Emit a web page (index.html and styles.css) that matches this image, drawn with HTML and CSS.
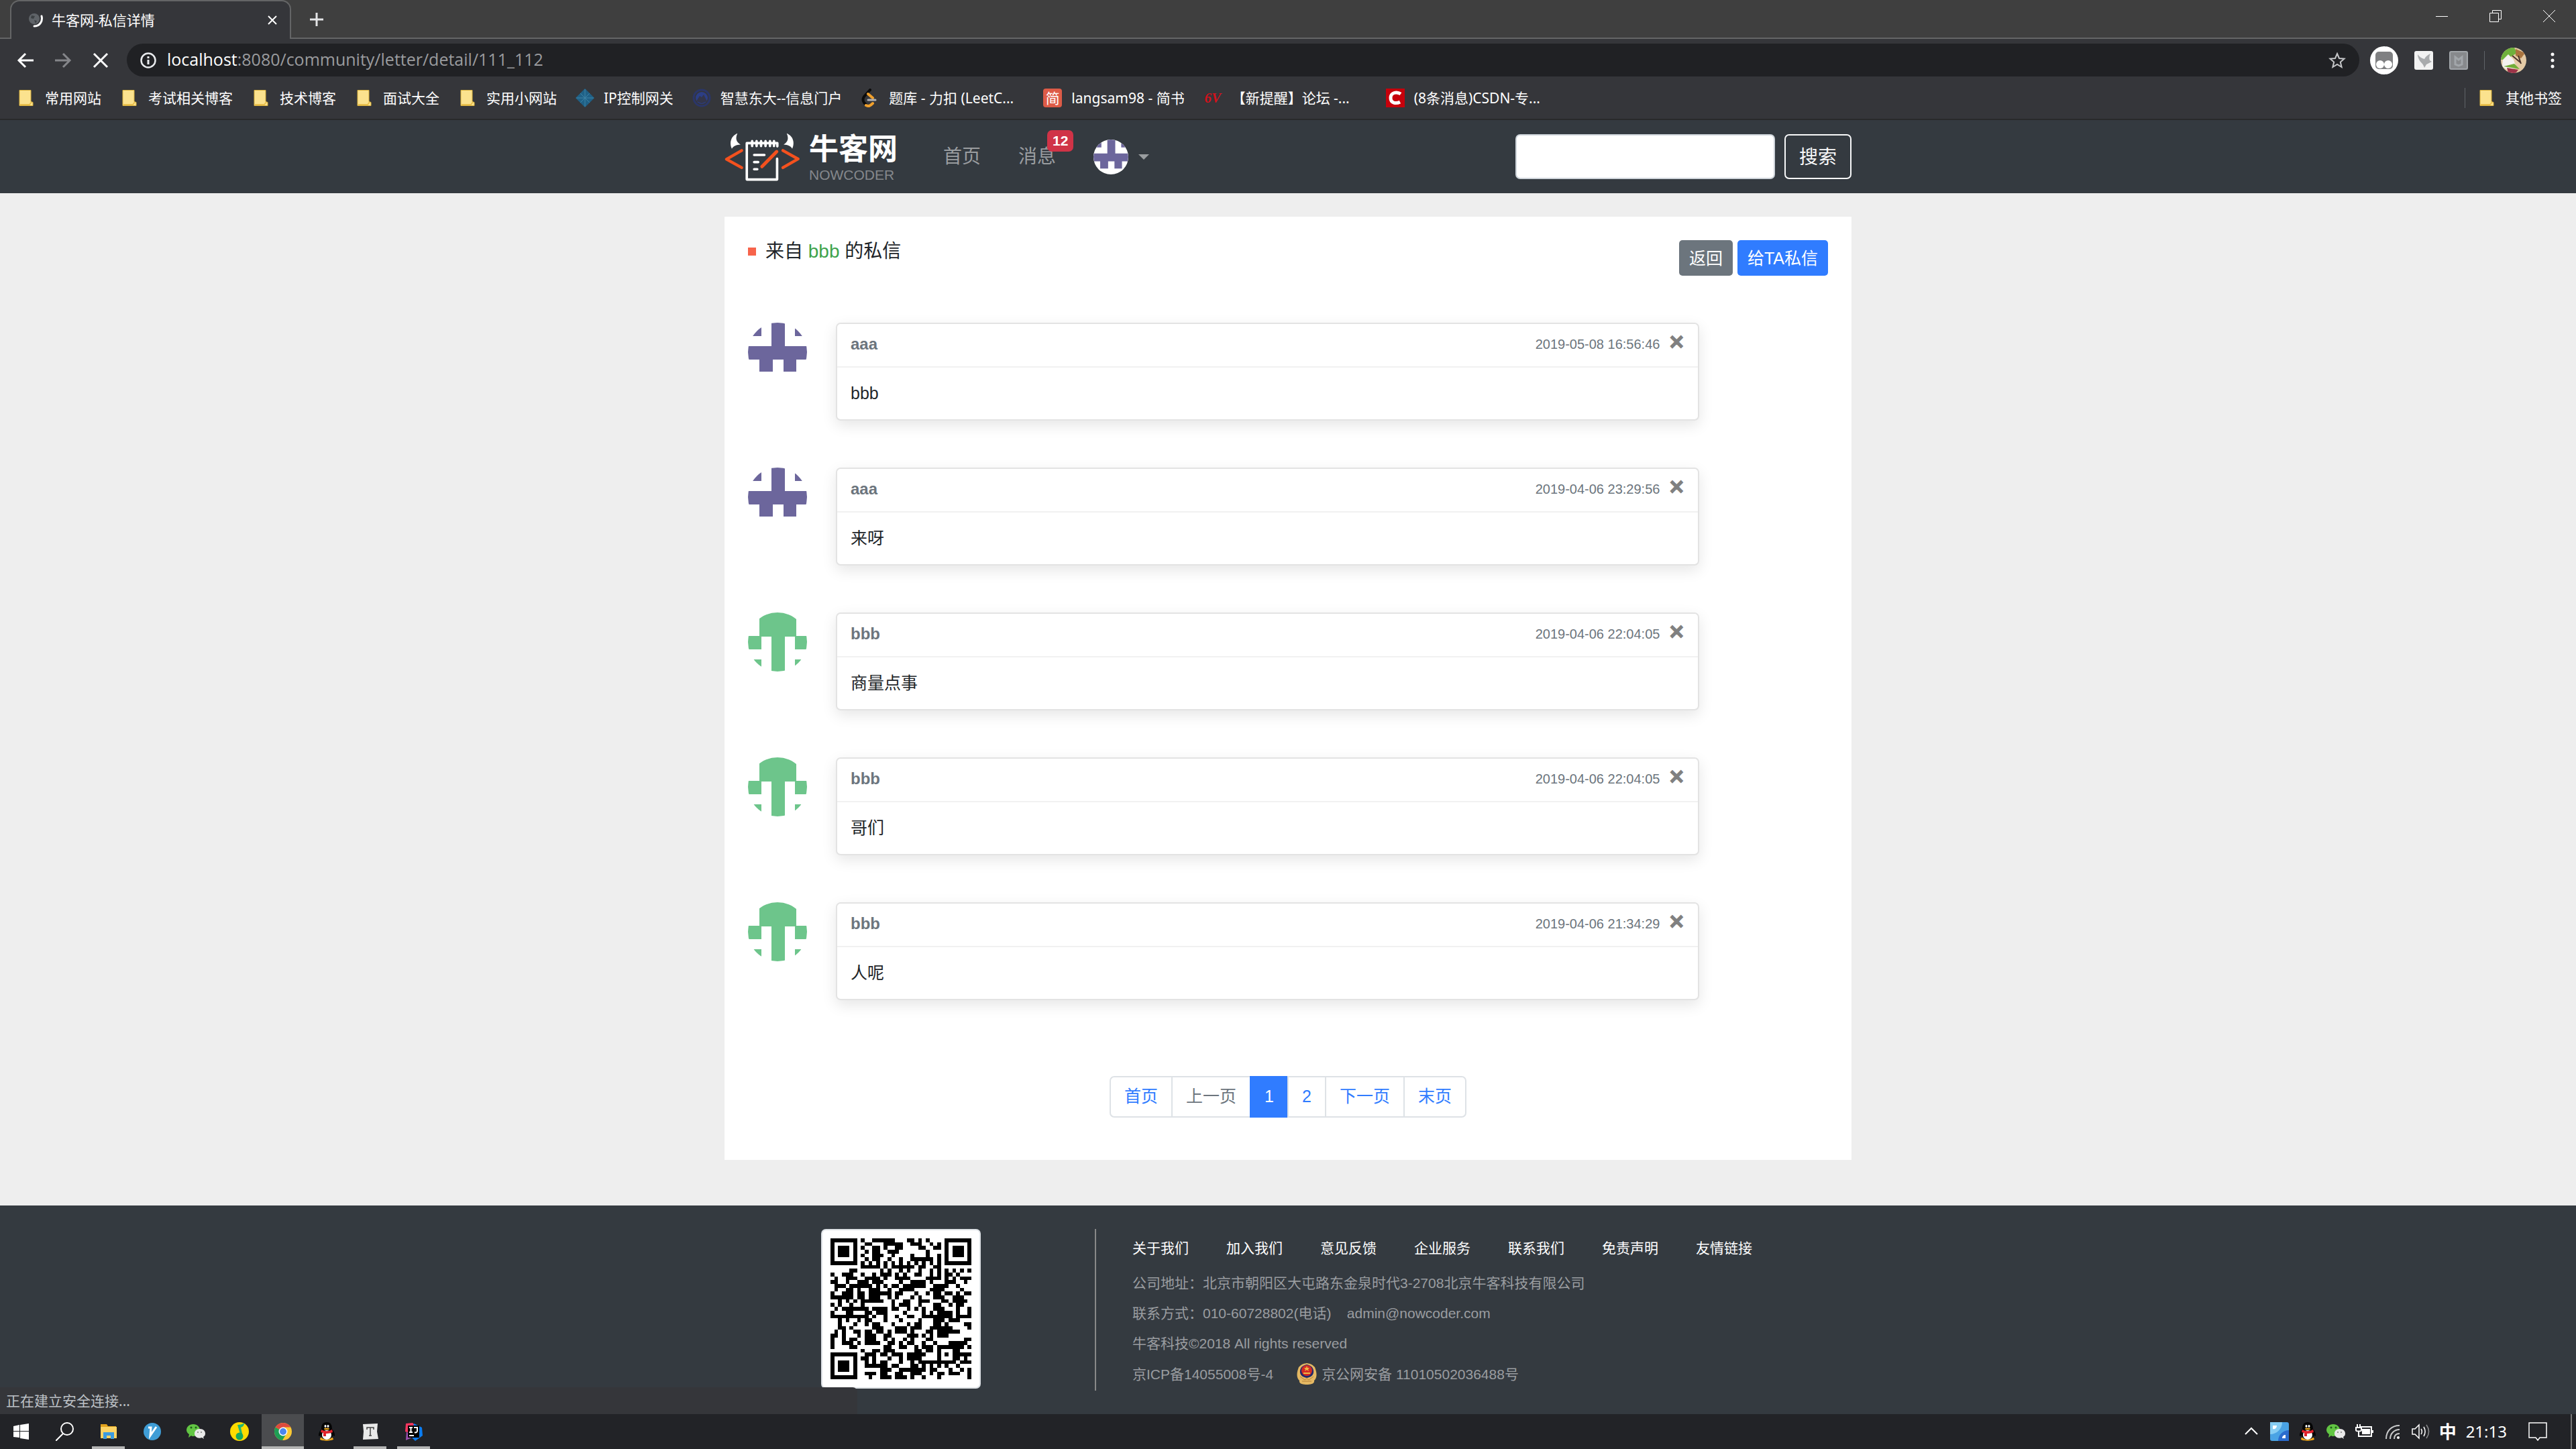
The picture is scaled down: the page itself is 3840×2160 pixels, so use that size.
FILE: index.html
```html
<!DOCTYPE html>
<html lang="zh-CN">
<head>
    <meta charset="UTF-8">
    <meta name="viewport" content="width=device-width, initial-scale=1.0">
    <title>牛客网-私信详情</title>
    <link rel="stylesheet" href="styles.css">
</head>
<body>

<!-- 公用图标 -->
<svg class="sprite" aria-hidden="true">
    <defs>
        <clipPath id="round"><circle cx="44" cy="44" r="44"/></clipPath>
    </defs>
    <symbol id="user-aaa" viewBox="0 0 88 88">
        <path clip-path="url(#round)" fill="#6c669c" d="M0 0h20v20H0zM35 0h20v36H35zM70 0h18v20H70zM0 35h88v20H0zM17 54h20v19H17zM53 54h19v19H53z"/>
    </symbol>
    <symbol id="user-bbb" viewBox="0 0 88 88">
        <path clip-path="url(#round)" fill="#6dc58b" d="M17 0h55v36H17zM0 35h20v20H0zM70 35h18v20H70zM35 35h20v53H35zM0 70h20v18H0zM70 70h18v18H70z"/>
    </symbol>
    <symbol id="folder" viewBox="0 0 28 28">
        <path fill="#fbe28e" stroke="#d9b13c" d="M4 2.500h17v17l3 1v5H4z"/>
        <path fill="none" stroke="#e9c04c" stroke-width="2" d="M5 24h14l3-4"/>
    </symbol>
    <symbol id="qq" viewBox="0 0 28 28">
        <path fill="#eba51c" d="M4 25c1-4 6-3 9 0 4-3 9-4 11 0 1 3-21 4-20 0z"/>
        <path fill="#050505" d="M14 0c6 0 8 4 8 10 2 3 4 6 4 9 0 3-2 2-3 0 0 4-4 7-9 7s-9-3-9-7c-1 2-3 3-3 0 0-3 2-6 4-9 0-6 2-10 8-10z"/>
        <ellipse cx="14" cy="19" rx="7" ry="7" fill="#fff"/>
        <path fill="#e0222b" d="M6 11c5 3 11 3 16 0l1 4c-3 1-6 2-9 2h-1v4H9v-5l-4-1z"/>
        <ellipse cx="12" cy="6" rx="1.500" ry="2" fill="#fff"/>
        <ellipse cx="16" cy="6" rx="1.500" ry="2" fill="#fff"/>
        <ellipse cx="14" cy="10" rx="4" ry="1.300" fill="#eba51c"/>
    </symbol>
    <symbol id="wechat" viewBox="0 0 28 28">
        <path fill="#62c543" d="M10 3c6 0 10 4 10 9s-4 9-10 9c-1 0-2 0-3-1l-4 3 1-5c-2-1-4-4-4-6 0-5 4-9 10-9z"/>
        <circle cx="7" cy="8" r="1.500" fill="#1f5b1b"/><circle cx="14" cy="8" r="1.500" fill="#1f5b1b"/>
        <path fill="#e9e9e9" d="M20 10c5 0 8 3 8 7 0 2-1 4-3 5l1 3-3-2c-6 2-11-1-11-6 0-4 3-7 8-7z"/>
        <circle cx="17" cy="15" r="1" fill="#777"/><circle cx="22" cy="15" r="1" fill="#777"/>
    </symbol>
</svg>

<div class="browser">
    <div class="tab-strip">
        <div class="tab">
            <svg class="favicon" viewBox="0 0 24 24"><circle cx="10" cy="10" r="8" fill="#5f6368"/><path d="M6 5l5 1-2 4-4-1zM10 12l4 1-2 4z" fill="#3c4043"/><path d="M21 6c2 8-3 15-11 15" fill="none" stroke="#fff" stroke-width="3" stroke-linecap="round"/></svg>
            <span class="tab-title">牛客网-私信详情</span>
            <button class="icon-btn" aria-label="关闭标签页"><svg width="16" height="16" viewBox="0 0 16 16"><path d="M2 2l12 12M14 2L2 14" stroke="#fff" stroke-width="2"/></svg></button>
        </div>
        <button class="icon-btn new-tab" aria-label="打开新的标签页"><svg width="22" height="22" viewBox="0 0 22 22"><path d="M11 1v20M1 11h20" stroke="#e3e4e6" stroke-width="3"/></svg></button>
        <div class="window-buttons">
            <button class="icon-btn" aria-label="最小化"><svg width="20" height="20" viewBox="0 0 20 20"><path d="M1 10.500h18" stroke="#fff"/></svg></button>
            <button class="icon-btn" aria-label="还原"><svg width="20" height="20" viewBox="0 0 20 20" fill="none" stroke="#fff"><path d="M1.500 5.500h13v13h-13zM5.500 5V1.500h13v13H15"/></svg></button>
            <button class="icon-btn" aria-label="关闭"><svg width="20" height="20" viewBox="0 0 20 20"><path d="M1 1l18 18M19 1L1 19" stroke="#fff"/></svg></button>
        </div>
    </div>

    <div class="toolbar">
        <button class="icon-btn" aria-label="后退"><svg width="26" height="26" viewBox="0 0 26 26" fill="none" stroke="#fff" stroke-width="3"><path d="M25 13H3M13 3L3 13l10 10"/></svg></button>
        <button class="icon-btn" aria-label="前进"><svg width="26" height="26" viewBox="0 0 26 26" fill="none" stroke="#85868a" stroke-width="3"><path d="M1 13h22M13 3l10 10-10 10"/></svg></button>
        <button class="icon-btn" aria-label="停止"><svg width="26" height="26" viewBox="0 0 26 26" fill="none" stroke="#fff" stroke-width="3"><path d="M3 3l20 20M23 3L3 23"/></svg></button>
        <div class="address">
            <svg width="24" height="24" viewBox="0 0 24 24" fill="none" stroke="#e8eaed"><circle cx="12" cy="12" r="10.500" stroke-width="2.500"/><path d="M12 11v7M12 6v3" stroke-width="3"/></svg>
            <span class="url"><b>localhost</b>:8080/community/letter/detail/111_112</span>
            <svg width="26" height="26" viewBox="0 0 26 26"><path d="M13 3l3 7 7.500.6-5.700 5 1.800 7.400-6.600-4-6.600 4 1.800-7.400-5.700-5L10 10z" fill="none" stroke="#c6c7c9" stroke-width="2"/></svg>
        </div>
        <div class="extensions">
            <svg width="42" height="42" viewBox="0 0 42 42"><circle cx="21" cy="21" r="21" fill="#fff"/><rect x="8" y="8" width="26" height="26" rx="5" fill="#7f8082"/><circle cx="15" cy="27" r="6" fill="#fff"/><circle cx="27" cy="27" r="6" fill="#fff"/></svg>
            <svg width="28" height="28" viewBox="0 0 28 28"><rect width="28" height="28" rx="3" fill="#f2f2f2"/><path d="M5 5c3 4 6 6 10 7 2-4 5-6 9-8-2 4-2 7-1 10l3 2c-3 1-5 3-8 4l-3 5c-1-3-2-5-4-7-3-3-6-8-6-13z" fill="#a9abad"/></svg>
            <svg width="28" height="28" viewBox="0 0 28 28"><rect x="1" y="1" width="26" height="26" rx="2" fill="#87898c" stroke="#a2a6aa" stroke-width="2"/><path d="M9 20V9l5 4 5-4v11l-5 2z" fill="none" stroke="#a2a6aa" stroke-width="3"/></svg>
            <span class="divider"></span>
            <svg width="38" height="38" viewBox="0 0 38 38">
                <clipPath id="profile"><circle cx="19" cy="19" r="19"/></clipPath>
                <g clip-path="url(#profile)"><path fill="#e5cba6" d="M0 0h38v38H0z"/><path fill="#6fb13c" d="M0 0h20l4 8-10 6-10 4H0z"/><path fill="#a9743f" d="M22 2l14 6-6 8-8-4z"/><path fill="#f4f1f0" d="M3 18l8-8 8 8 4 12-12 4-9-6z"/><path stroke="#4a342b" stroke-width="2" d="M17 12l12 10M26 12l4 12"/><path fill="#72ad38" d="M4 28l16-4 8 8-12-2z"/><path fill="#9d3449" d="M9 30l17 3-4 5H11z"/></g>
            </svg>
            <button class="icon-btn" aria-label="菜单"><svg width="6" height="24" viewBox="0 0 6 24" fill="#fff"><circle cx="3" cy="3" r="2.500"/><circle cx="3" cy="12" r="2.500"/><circle cx="3" cy="21" r="2.500"/></svg></button>
        </div>
    </div>

    <div class="bookmarks">
        <a href="#"><svg><use href="#folder"/></svg><span>常用网站</span></a>
        <a href="#"><svg><use href="#folder"/></svg><span>考试相关博客</span></a>
        <a href="#"><svg><use href="#folder"/></svg><span>技术博客</span></a>
        <a href="#"><svg><use href="#folder"/></svg><span>面试大全</span></a>
        <a href="#"><svg><use href="#folder"/></svg><span>实用小网站</span></a>
        <a href="#"><svg viewBox="0 0 28 28"><path fill="#1f6187" d="M14 0l14 14-14 14L0 14z"/><path d="M7 7l14 14M21 7L7 21M14 1v26M1 14h26" stroke="#3e83a5" stroke-width="1"/></svg><span>IP控制网关</span></a>
        <a href="#"><svg viewBox="0 0 28 28"><circle cx="14" cy="14" r="12" fill="none" stroke="#2b3668" stroke-width="3"/><circle cx="14" cy="14" r="9" fill="#2c3e86"/><path fill="#33354a" d="M6 19l5-8 3 2 3-4 5 10-8 3z"/></svg><span>智慧东大--信息门户</span></a>
        <a href="#"><svg viewBox="0 0 28 28" fill="none" stroke-linecap="round" stroke-width="4"><path stroke="#0b0b0b" d="M14 2L5 12c-2 3-2 6 0 9l3 3"/><path stroke="#f0a02c" d="M11 8l7 6M8 25c4 2 6 1 10-3"/><path stroke="#b3b3b3" stroke-width="3" d="M11 17h11"/></svg><span class="wide">题库 - 力扣 (LeetC...</span></a>
        <a href="#"><span class="jian">简</span><span>langsam98 - 简书</span></a>
        <a href="#"><span class="six">6V</span><span class="wide">【新提醒】论坛 -...</span></a>
        <a href="#"><svg viewBox="0 0 28 28"><path fill="#c7000b" d="M0 0h28v28H0z"/><path d="M22 8c-6-4-15-2-15 6s8 9 14 6" fill="none" stroke="#fff" stroke-width="5"/></svg><span class="wide">(8条消息)CSDN-专...</span></a>
        <a href="#" class="other-bookmarks"><svg><use href="#folder"/></svg><span>其他书签</span></a>
    </div>
</div>

<header class="navbar">
    <div class="container nav-inner">
        <a class="brand" href="#">
            <svg width="112" height="72" viewBox="18 20 337 216" fill="none" stroke-linecap="round" stroke-linejoin="round">
                <path fill="#fff" d="M76 22c-34 15-35 48-25 69 7-13 20-18 39-19-20-11-24-27-14-50zM297 22c34 15 35 48 25 69-7-13-20-18-39-19 20-11 24-27 14-50z"/>
                <path stroke="#fff" stroke-width="11" d="M255 80V66H118v163h136v-93M142 57v22M162 57v22M182 57v22M202 57v22M222 57v22M240 57v22"/>
                <path stroke="#fff" stroke-width="11" d="M151 119h46M151 151h18M151 183h14"/>
                <path stroke="#f4511e" stroke-width="13" d="M95 99l-68 39 68 38M280 99l68 38-68 39"/>
                <path stroke="#f4511e" stroke-width="15" d="M252 104l-62 63-4 4"/>
            </svg>
            <span class="brand-text"><strong>牛客网</strong><small>NOWCODER</small></span>
        </a>
        <nav class="nav-links">
            <a href="#">首页</a>
            <a href="#" class="message-link">消息<span class="badge">12</span></a>
            <button class="user-menu" aria-label="用户菜单"><svg class="nav-avatar"><use href="#user-aaa"/></svg><span class="caret"></span></button>
        </nav>
        <form class="search">
            <input type="search" aria-label="搜索内容">
            <button type="button">搜索</button>
        </form>
    </div>
</header>

<main class="container letters">
    <div class="letters-head">
        <h1><i class="square"></i><span>来自 <em>bbb</em> 的私信</span></h1>
        <div class="actions">
            <button class="btn btn-back">返回</button>
            <button class="btn btn-send">给TA私信</button>
        </div>
    </div>

    <ul class="letter-list">
        <li>
            <a href="#" aria-label="aaa"><svg class="avatar"><use href="#user-aaa"/></svg></a>
            <div class="toast">
                <div class="toast-header"><strong>aaa</strong><small>2019-05-08 16:56:46</small><button class="close" aria-label="删除">&times;</button></div>
                <div class="toast-body">bbb</div>
            </div>
        </li>
        <li>
            <a href="#" aria-label="aaa"><svg class="avatar"><use href="#user-aaa"/></svg></a>
            <div class="toast">
                <div class="toast-header"><strong>aaa</strong><small>2019-04-06 23:29:56</small><button class="close" aria-label="删除">&times;</button></div>
                <div class="toast-body">来呀</div>
            </div>
        </li>
        <li>
            <a href="#" aria-label="bbb"><svg class="avatar"><use href="#user-bbb"/></svg></a>
            <div class="toast">
                <div class="toast-header"><strong>bbb</strong><small>2019-04-06 22:04:05</small><button class="close" aria-label="删除">&times;</button></div>
                <div class="toast-body">商量点事</div>
            </div>
        </li>
        <li>
            <a href="#" aria-label="bbb"><svg class="avatar"><use href="#user-bbb"/></svg></a>
            <div class="toast">
                <div class="toast-header"><strong>bbb</strong><small>2019-04-06 22:04:05</small><button class="close" aria-label="删除">&times;</button></div>
                <div class="toast-body">哥们</div>
            </div>
        </li>
        <li>
            <a href="#" aria-label="bbb"><svg class="avatar"><use href="#user-bbb"/></svg></a>
            <div class="toast">
                <div class="toast-header"><strong>bbb</strong><small>2019-04-06 21:34:29</small><button class="close" aria-label="删除">&times;</button></div>
                <div class="toast-body">人呢</div>
            </div>
        </li>
    </ul>

    <nav class="pagination" aria-label="分页">
        <a href="#">首页</a>
        <a href="#" class="disabled">上一页</a>
        <a href="#" class="active">1</a>
        <a href="#">2</a>
        <a href="#">下一页</a>
        <a href="#">末页</a>
    </nav>
</main>

<footer class="footer">
    <div class="container footer-inner">
        <div class="qrcode">
            <svg viewBox="0 0 37 37" shape-rendering="crispEdges"><path id="qr"/></svg>
        </div>
        <div class="footer-info">
            <div class="footer-links">
                <a href="#">关于我们</a>
                <a href="#">加入我们</a>
                <a href="#">意见反馈</a>
                <a href="#">企业服务</a>
                <a href="#">联系我们</a>
                <a href="#">免责声明</a>
                <a href="#">友情链接</a>
            </div>
            <p>公司地址：北京市朝阳区大屯路东金泉时代3-2708北京牛客科技有限公司</p>
            <p>联系方式：010-60728802(电话)&nbsp;&nbsp;&nbsp;&nbsp;admin@nowcoder.com</p>
            <p>牛客科技©2018 All rights reserved</p>
            <p class="record">
                <span>京ICP备14055008号-4</span>
                <svg width="30" height="32" viewBox="0 0 30 32"><path fill="#e4b863" d="M15 0c7 1 9 3 12 6 3 8 4 15-1 20 1 5-6 6-11 6S3 31 4 26c-5-5-4-12-1-20 3-3 5-5 12-6z"/><path fill="#22296b" d="M15 2c8 2 9 5 10 9 1 7-4 10-10 11C9 21 4 18 5 11c1-4 2-7 10-9z"/><circle cx="15" cy="11" r="8" fill="#d42b25"/><path fill="#efb744" d="M15 4l1 3h3l-2 2 1 3-3-2-3 2 1-3-2-2h3zM10 14h10v2H10z"/><path fill="none" stroke="#b67e39" d="M5 20l7 5 3-2 3 2 7-5M8 27h14"/></svg>
                <span>京公网安备 11010502036488号</span>
            </p>
        </div>
    </div>
</footer>

<div class="taskbar">
    <div class="status">正在建立安全连接...</div>
    <div class="apps">
        <button aria-label="开始"><svg viewBox="0 0 28 28" fill="#fff"><path d="M2 6l9-2v9H2zM12 4l13-2v11H12zM2 14h9v9l-9-1zM12 14h13v12l-13-2z"/></svg></button>
        <button aria-label="搜索"><svg viewBox="0 0 28 28" fill="none" stroke="#fff" stroke-width="2"><circle cx="17" cy="10" r="9"/><path d="M11 17L0 28"/></svg></button>
        <button class="open" aria-label="文件资源管理器"><svg viewBox="0 0 28 28"><path fill="#e2a21c" d="M2 3h9l2 3h12v6H2z"/><path fill="#fdd365" d="M2 7h24v17H2z"/><path fill="#3b9be0" d="M6 15h16v10h-5v-5h-6v5H6z"/></svg></button>
        <button aria-label="V"><svg viewBox="0 0 28 28"><circle cx="14" cy="14" r="13" fill="#3f9dd6"/><path d="M8 8h4l-1 12 9-13" fill="none" stroke="#fff" stroke-width="3"/></svg></button>
        <button aria-label="微信"><svg><use href="#wechat"/></svg></button>
        <button aria-label="QQ音乐"><svg viewBox="0 0 28 28"><circle cx="14" cy="14" r="14" fill="#ffdb00"/><path d="M11 4c4 0 8-1 10-3 0 4-2 6-5 7l3 13h-3L11 4z" fill="#22b573"/><circle cx="14" cy="21" r="5.500" fill="#17a95f"/></svg></button>
        <button class="open current" aria-label="Chrome"><svg viewBox="0 0 28 28"><circle cx="14" cy="14" r="13" fill="#fcc934"/><path fill="#1e9e55" d="M14 14L2.700 7.500A13 13 0 0 0 13 27l6-10z"/><path fill="#dd4b3e" d="M14 14L2.700 7.500a13 13 0 0 1 22.600 0H14z"/><circle cx="14" cy="14" r="6.500" fill="#fff"/><circle cx="14" cy="14" r="5" fill="#4a86ee"/></svg></button>
        <button aria-label="QQ"><svg><use href="#qq"/></svg></button>
        <button class="open" aria-label="Typora"><svg viewBox="0 0 28 28"><path fill="#e9e9e9" d="M3 3l22-1-1 12 2 11-23 1 1-12z"/><path fill="none" stroke="#444" stroke-width="1.500" d="M9 11V8h10v3M14 8v12M12 20h4"/></svg></button>
        <button class="open" aria-label="IntelliJ IDEA"><svg viewBox="0 0 28 28"><path fill="#f5365f" d="M2 2l10-1 6 6-8 10-9-3z"/><path fill="#0a7bf0" d="M14 2l12 6 1 12-11 8-6-6z"/><path fill="#9b4fb0" d="M3 14l8 9-9 4z"/><path fill="#000" d="M5 5h17v18H5z"/><path fill="none" stroke="#fff" stroke-width="2" d="M7 8h5M9.500 8v7M7 15h5M14 8h5v5c0 2-2 3-4 2"/><path fill="#fff" d="M7 19h7v2H7z"/></svg></button>
    </div>
    <div class="tray">
        <svg viewBox="0 0 28 28" fill="none" stroke="#fff" stroke-width="2"><path d="M5 18l9-9 9 9"/></svg>
        <svg viewBox="0 0 28 28"><rect width="28" height="28" rx="3" fill="#4aa3e4"/><path fill="#86cdf3" d="M0 0h18c0 10-8 18-18 18z"/><path fill="#2b6cce" d="M28 12v16H12c0-9 7-16 16-16z"/><path fill="#fff" d="M4 5h6c0 4-3 6-6 5zM23 19v5h-5c0-3 2-5 5-5z"/></svg>
        <svg><use href="#qq"/></svg>
        <svg><use href="#wechat"/></svg>
        <svg viewBox="0 0 28 28" fill="none" stroke="#fff" stroke-width="2"><path d="M9 7h16v14H5M2 8h8v4c0 2-8 2-8 0zM4 3v5M8 3v5M6 13v8"/><path fill="#fff" d="M11 10h12v8H11zM26 12h2v4h-2z" stroke="none"/></svg>
        <svg viewBox="0 0 28 28" fill="none" stroke="#c9cacb" stroke-width="2"><path d="M5 25C5 13 13 5 25 5M11 25c0-8 6-14 14-14M17 25c0-5 3-8 8-8"/><circle cx="23" cy="23" r="2" fill="#fff" stroke="none"/></svg>
        <svg viewBox="0 0 28 28" fill="none" stroke="#fff" stroke-width="1.500"><path d="M2 10h4l6-6v20l-6-6H2zM15 10c2 3 2 5 0 8M19 7c3 5 3 9 0 14"/><path stroke="#8b8c8e" d="M23 4c5 7 5 13 0 20"/></svg>
        <span class="ime">中</span>
        <time>21:13</time>
        <svg class="notice" viewBox="0 0 28 28" fill="none" stroke="#fff" stroke-width="1.500"><path d="M1 1h26v22H17l-3 4-3-4H1z"/></svg>
        <span class="show-desktop"></span>
    </div>
</div>

<script src="qrcode.js"></script>
</body>
</html>
```
FILE: qrcode.js
```js
// 每行为黑色模块的列区间
const rows = [
    '0-6,8,11-16,20-21,23,25,30-36',
    '0,6,9-10,14-18,21-23,26,28,30,36',
    '0,2-4,6,8,11-12,14,17-18,23-24,27-28,30,32-34,36',
    '0,2-4,6,9,11-12,15-17,25,30,32-34,36',
    '0,2-4,6,8,11-13,16,21,25,28,30,32-34,36',
    '0,6,9,11-12,15,18,21-26,28,30,36',
    '0-6,8,10,12,14,16,18,20,22,24,26,28,30-36',
    '8-12,14,16-21,23-24,27-28',
    '5-6,13,15,18,20,23,26,28,30,32,34,36',
    '0,3-5,8,11,13-15,17,19,22-23,26,28,30-31,33',
    '1,4-6,9-12,14,17-20,25-28,30,32,34-36',
    '0-1,4,7-9,11-13,18,21-24,26,30-32,35',
    '1-3,5-10,12,14,16-17,19-24,27-30,33',
    '1,4-5,7,10-12,15,18-21,26-29,34',
    '0,3-5,7-8,10-15,17-18,22,25,27-28,30-31,33,35-36',
    '0-5,7-8,10-12,15,17,21,23,27-29,32-34',
    '2,4,6,8-13,16,19-20,23-25,29-30,32-35',
    '0,2,5,8,16,18-20,23,27-28,31,33-34',
    '1,3-9,11-14,16-17,20,22,24,27-29,33,36',
    '0,4-5,9-10,12-14,19,24,26,28-31,33,36',
    '0-9,11,14,17,20-21,24-31,33-36',
    '2,4,7,9-10,14,18,23,27-29,31-33',
    '2,6,9,11-12,16,20,22-23,27-28,30,35-36',
    '2-3,5,11-13,17-19,21-23,26-31,36',
    '1,3,6-7,9-10,12-13,15,17-19,21,25-26,28-33',
    '0-1,3,7,9-11,14-15,20-22,24,26,28-30',
    '0,3,5-6,9-11,14,16,19,21,25-26,35-36',
    '0,3-5,7,9-12,15-16,18,20-21,24,27,31-35',
    '0,5-6,14-15,18-19,22,24-26,28-34,36',
    '8,11-12,14-16,22-23,25-26,28,32-33',
    '0-6,9-11,13-14,16-18,20-24,28,30,32-36',
    '0,6,8-9,11,15,18,20-23,28,32-33,35',
    '0,2-4,6,9,11,13-14,18,21,23-32,34-36',
    '0,2-4,6,9-14,16-17,21-22,24,26,28,30,33',
    '0,2-4,6,13-15,18-21,22-24,26-27,31,34,36',
    '0,6,9-11,13-14,17-18,21-23,26,28-29,31-33,36',
    '0-6,10,13-15,17-19,21,24,28,36'
];

let d = '';
rows.forEach((row, y) => {
    row.split(',').forEach(part => {
        const [from, to = from] = part.split('-').map(Number);
        d += `M${from} ${y}h${to - from + 1}v1H${from}z`;
    });
});
document.getElementById('qr').setAttribute('d', d);
```
FILE: styles.css
```css
* {
    box-sizing: border-box;
}

body {
    margin: 0;
    min-height: 100vh;
    display: flex;
    flex-direction: column;
    background-color: #eee;
    color: #212529;
    font-family: "Liberation Sans", "Noto Sans CJK SC", sans-serif;
    font-size: 25px;
    line-height: 36px;
}

a {
    color: inherit;
    text-decoration: none;
}

button {
    font-family: inherit;
    padding: 0;
    border: none;
    background: none;
    cursor: pointer;
}

svg {
    display: block;
    flex-shrink: 0;
}

.sprite {
    position: absolute;
    width: 0;
    height: 0;
}

.container {
    width: 100%;
    max-width: 1680px;
    margin: 0 auto;
}

/* 浏览器窗口 */
.browser {
    background-color: #35363a;
    border-bottom: 2px solid #28292b;
    color: #fff;
    font-family: "Noto Sans", "Noto Sans CJK SC", sans-serif;
    font-size: 21px;
    line-height: 30px;
}

.icon-btn {
    display: flex;
    align-items: center;
    justify-content: center;
}

.tab-strip {
    display: flex;
    height: 58px;
    padding-left: 15px;
    background-color: #3f3f3f;
    box-shadow: inset 0 -2px #646566;
}

.tab {
    display: flex;
    align-items: center;
    width: 419px;
    padding: 0 18px 0 24px;
    background-color: #35363a;
    border: 2px solid #646566;
    border-bottom: none;
    border-radius: 14px 14px 0 0;
}

.favicon {
    width: 24px;
    height: 24px;
    margin-right: 12px;
}

.tab-title {
    flex: 1;
}

.new-tab {
    width: 76px;
}

.window-buttons {
    display: flex;
    margin-left: auto;
    height: 48px;
}

.window-buttons button {
    width: 80px;
}

.toolbar {
    display: flex;
    align-items: center;
    padding: 7px 32px 7px 25px;
    gap: 30px;
}

.address {
    flex: 1;
    display: flex;
    align-items: center;
    gap: 16px;
    height: 49px;
    margin-left: -4px;
    padding: 0 20px;
    border-radius: 25px;
    background-color: #202124;
}

.url {
    flex: 1;
    padding-bottom: 3px;
    color: #9a9b9e;
    font-size: 25px;
    font-family: "Open Sans", sans-serif;
}

.url b {
    font-weight: normal;
    color: #fff;
}

.extensions {
    display: flex;
    align-items: center;
    gap: 24px;
    margin-left: -14px;
}

.extensions .icon-btn {
    margin-left: 12px;
}

.divider {
    width: 1px;
    height: 28px;
    background-color: #5f6368;
}

.bookmarks {
    display: flex;
    align-items: center;
    gap: 28px;
    padding: 10px 21px 16px 25px;
}

.bookmarks a {
    display: flex;
    align-items: center;
    gap: 14px;
    white-space: nowrap;
}

.bookmarks svg {
    width: 28px;
    height: 28px;
}

.bookmarks .wide {
    width: 202px;
}

.bookmarks .other-bookmarks {
    margin-left: auto;
    padding-left: 18px;
    border-left: 1px solid #5f6368;
}

.jian,
.six {
    width: 28px;
    line-height: 28px;
    text-align: center;
}

.jian {
    border-radius: 4px;
    background-color: #dd5b47;
}

.six {
    font-family: "Liberation Serif", serif;
    font-style: italic;
    font-weight: bold;
    color: #d3121c;
}

/* 头部导航 */
.navbar {
    background-color: #343a40;
    padding: 14px 0;
}

.nav-inner {
    display: flex;
    align-items: center;
    height: 81px;
}

.brand {
    display: flex;
    align-items: center;
    gap: 14px;
}

.brand-text {
    display: flex;
    flex-direction: column;
    padding-top: 7px;
    color: #fff;
}

.brand-text strong {
    font-size: 44px;
    line-height: 48px;
}

.brand-text small {
    font-size: 21px;
    line-height: 28px;
    color: #85888c;
}

.nav-links {
    display: flex;
    align-items: center;
    gap: 56px;
    margin-left: 68px;
    color: #9a9da0;
    font-size: 28px;
}

.message-link {
    position: relative;
}

.badge {
    position: absolute;
    left: 43px;
    top: -22px;
    padding: 0 8px;
    border-radius: 7px;
    background-color: #d03347;
    color: #fff;
    font-size: 21px;
    line-height: 32px;
    font-weight: bold;
}

.user-menu {
    display: flex;
    align-items: center;
    gap: 15px;
}

.nav-avatar {
    width: 52px;
    height: 52px;
    border-radius: 50%;
    background-color: #fff;
}

.caret {
    border: 8px solid transparent;
    border-top-color: #9a9da0;
    border-bottom: none;
}

.search {
    display: flex;
    gap: 14px;
    margin-left: auto;
}

.search input {
    width: 387px;
    height: 67px;
    padding: 0 21px;
    border: 2px solid #ced4da;
    border-radius: 7px;
    background-color: #fff;
    font-size: 28px;
}

.search button {
    padding: 0 20px 4px;
    border: 2px solid #f8f9fa;
    border-radius: 7px;
    color: #f8f9fa;
    font-size: 28px;
}

/* 私信列表 */
.letters {
    margin-top: 35px;
    margin-bottom: 68px;
    padding: 35px 35px 63px;
    background-color: #fff;
}

.letters-head {
    display: flex;
    justify-content: space-between;
    align-items: flex-start;
}

.letters-head h1 {
    display: flex;
    align-items: center;
    gap: 14px;
    margin: 0;
    font-size: 28px;
    font-weight: normal;
    line-height: 34px;
}

.letters-head em {
    color: #3ea34c;
    font-style: normal;
}

.square {
    width: 12px;
    height: 12px;
    background-color: #f7644b;
}

.actions {
    display: flex;
    gap: 7px;
}

.btn {
    height: 53px;
    padding: 0 15px 4px;
    border-radius: 5px;
    color: #fff;
    font-size: 25px;
}

.btn-back {
    background-color: #6c757d;
}

.btn-send {
    background-color: #307cff;
}

.letter-list {
    display: flex;
    flex-direction: column;
    gap: 70px;
    margin: 70px 0 0;
    padding: 0;
    list-style: none;
}

.letter-list li {
    display: flex;
    align-items: flex-start;
    gap: 43px;
}

.avatar {
    width: 88px;
    height: 88px;
}

.toast {
    flex: 1;
    max-width: 1287px;
    border: 2px solid #e3e3e3;
    border-radius: 7px;
    background-color: #fff;
    box-shadow: 0 7px 21px rgba(0, 0, 0, 0.1);
}

.toast-header {
    display: flex;
    align-items: center;
    height: 65px;
    padding: 0 21px 3px 20px;
    border-bottom: 2px solid #f1f1f1;
    color: #6c757d;
}

.toast-header strong {
    flex: 1;
    font-size: 24px;
}

.toast-header small {
    font-size: 20px;
}

.close {
    margin-left: 14px;
    padding-bottom: 6px;
    color: #808080;
    font-size: 37px;
    line-height: 36px;
    font-weight: bold;
    -webkit-text-stroke: 1px #808080;
}

.toast-body {
    padding: 20px 20px 21px;
}

.pagination {
    display: flex;
    justify-content: center;
    margin-top: 113px;
}

.pagination a {
    margin-left: -2px;
    padding: 10px 20px 12px;
    border: 2px solid #dee2e6;
    color: #307cff;
}

.pagination a:first-child {
    margin-left: 0;
    border-radius: 7px 0 0 7px;
}

.pagination a:last-child {
    border-radius: 0 7px 7px 0;
}

.pagination .disabled {
    color: #6c757d;
}

.pagination .active {
    border-color: #307cff;
    background-color: #307cff;
    color: #fff;
}

/* 尾部 */
.footer {
    flex: 1;
    padding: 35px 0;
    background-color: #343a40;
    color: #9a9da0;
    font-size: 21px;
    line-height: 31px;
}

.footer-inner {
    display: flex;
    align-items: flex-start;
    padding-left: 144px;
}

.qrcode {
    width: 238px;
    height: 238px;
    padding: 12px;
    border: 2px solid #dee2e6;
    border-radius: 7px;
    background-color: #fff;
}

.footer-info {
    display: flex;
    flex-direction: column;
    gap: 14px;
    height: 241px;
    margin-left: 170px;
    padding: 13px 0 0 54px;
    border-left: 2px solid #888;
}

.footer-links {
    display: flex;
    gap: 56px;
    margin-bottom: 7px;
    color: #fff;
}

.footer p {
    margin: 0;
}

.record {
    display: flex;
    align-items: center;
}

.record svg {
    margin: 0 7px 0 35px;
}

/* 任务栏 */
.taskbar {
    position: relative;
    display: flex;
    justify-content: space-between;
    height: 52px;
    background-color: #222327;
    color: #fff;
    font-family: "Noto Sans", "Noto Sans CJK SC", sans-serif;
}

.status {
    position: absolute;
    left: 0;
    bottom: 100%;
    width: 1278px;
    height: 40px;
    padding: 2px 9px;
    border-top-right-radius: 7px;
    background-color: #35363a;
    color: #bdc1c6;
    font-size: 21px;
}

.apps {
    display: flex;
    gap: 2px;
}

.apps button {
    display: flex;
    align-items: center;
    justify-content: center;
    width: 63px;
}

.apps svg {
    width: 28px;
    height: 28px;
}

.apps .open {
    background: linear-gradient(#b4b4b4, #b4b4b4) center bottom / 49px 4px no-repeat;
}

.apps .current {
    background-color: #4b4c4f;
    background-size: 63px 4px;
}

.tray {
    display: flex;
    align-items: center;
    gap: 14px;
}

.tray svg {
    width: 28px;
    height: 28px;
}

.ime {
    font-size: 26px;
    font-weight: bold;
}

.tray time {
    font-size: 24px;
}

.tray .notice {
    margin: 0 21px 0 18px;
}

.show-desktop {
    width: 8px;
    height: 52px;
    border-left: 2px solid #777;
}
```
